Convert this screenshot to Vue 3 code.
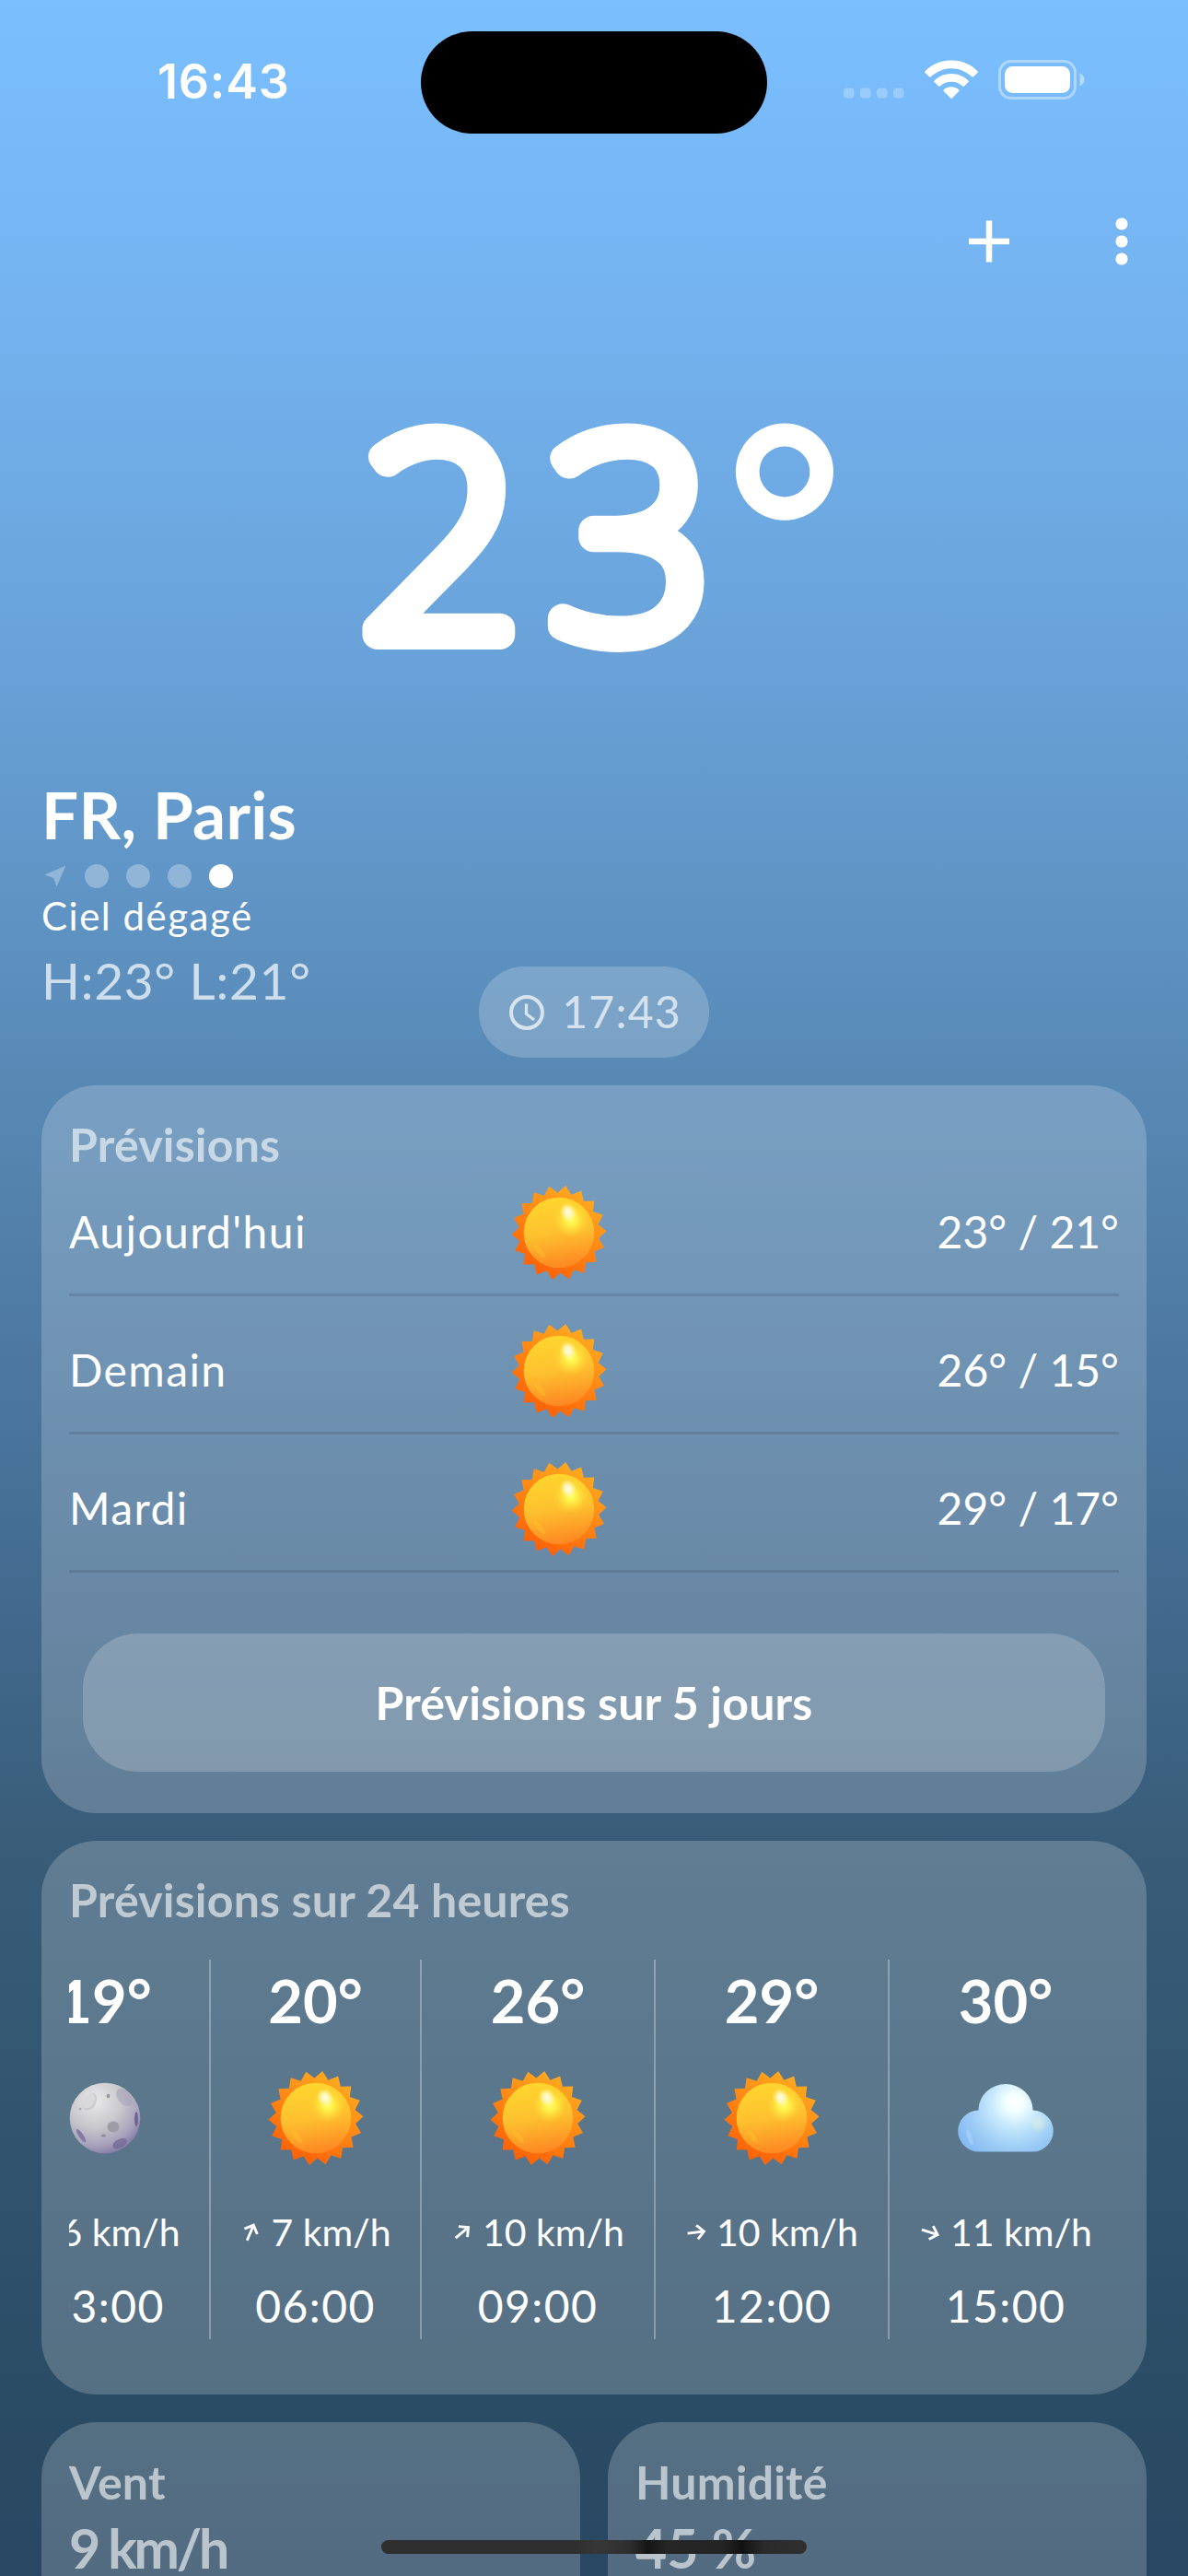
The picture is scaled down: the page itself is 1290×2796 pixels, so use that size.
<script setup>
const sunPoints = Array.from({ length: 36 }, (_, i) => {
  const angle = ((i * 10 - 2) * Math.PI) / 180
  const radius = i % 2 === 0 ? 51.5 : 43.5
  return `${(52 + radius * Math.cos(angle)).toFixed(2)},${(52 + radius * Math.sin(angle)).toFixed(2)}`
}).join(' ')

const days = [
  { name: "Aujourd'hui", temps: '23° / 21°' },
  { name: 'Demain', temps: '26° / 15°' },
  { name: 'Mardi', temps: '29° / 17°' },
]

const hours = [
  { temp: '19°', icon: 'moon', dir: 10, wind: '6 km/h', time: '03:00', narrow: true },
  { temp: '20°', icon: 'sun', dir: 23, wind: '7 km/h', time: '06:00', narrow: true },
  { temp: '26°', icon: 'sun', dir: 50, wind: '10 km/h', time: '09:00' },
  { temp: '29°', icon: 'sun', dir: 83, wind: '10 km/h', time: '12:00' },
  { temp: '30°', icon: 'cloud', dir: 108, wind: '11 km/h', time: '15:00' },
]
</script>

<template>
  <div class="screen">
    <svg class="defs" width="0" height="0" aria-hidden="true">
      <defs>
        <linearGradient id="ray" x1="0.25" y1="0.95" x2="0.75" y2="0.05">
          <stop offset="0" stop-color="#ff5f06" />
          <stop offset="1" stop-color="#ffab20" />
        </linearGradient>
        <linearGradient id="disc" x1="0.4" y1="0" x2="0.55" y2="1">
          <stop offset="0" stop-color="#ffd62e" />
          <stop offset="0.5" stop-color="#fdc02f" />
          <stop offset="1" stop-color="#fd8622" />
        </linearGradient>
        <radialGradient id="glow">
          <stop offset="0" stop-color="#ffff60" />
          <stop offset="0.3" stop-color="#fff850" stop-opacity="0.85" />
          <stop offset="1" stop-color="#ffdf33" stop-opacity="0" />
        </radialGradient>
        <radialGradient id="shine">
          <stop offset="0" stop-color="#fffbe0" />
          <stop offset="0.4" stop-color="#fff8c8" stop-opacity="0.9" />
          <stop offset="1" stop-color="#fff799" stop-opacity="0" />
        </radialGradient>
        <radialGradient id="moonFill" cx="0.36" cy="0.25" r="0.85">
          <stop offset="0" stop-color="#e9e9ea" />
          <stop offset="0.45" stop-color="#c8c7cb" />
          <stop offset="0.75" stop-color="#a7a1bb" />
          <stop offset="1" stop-color="#756b9e" />
        </radialGradient>
        <radialGradient id="cloudFill" gradientUnits="userSpaceOnUse" cx="62" cy="20" r="72">
          <stop offset="0" stop-color="#ffffff" />
          <stop offset="0.13" stop-color="#f4ffff" />
          <stop offset="0.38" stop-color="#c3e7fc" />
          <stop offset="0.7" stop-color="#9ccbf5" />
          <stop offset="1" stop-color="#83b8f1" />
        </radialGradient>
        <symbol id="sun" viewBox="0 0 104 104">
          <polygon :points="sunPoints" fill="url(#ray)" />
          <circle cx="52" cy="52" r="38.3" fill="url(#disc)" />
          <circle cx="65" cy="38" r="19" fill="url(#glow)" />
          <ellipse cx="62" cy="30" rx="9" ry="11" transform="rotate(-25 62 30)" fill="url(#shine)" />
          <ellipse cx="31" cy="72" rx="3" ry="9" transform="rotate(-40 31 72)" fill="#ffc62e" opacity="0.4" />
        </symbol>
        <symbol id="moon" viewBox="0 0 104 104">
          <circle cx="52" cy="52" r="38.3" fill="url(#moonFill)" />
          <ellipse cx="35.500" cy="34" rx="7" ry="10" transform="rotate(30 35.5 34)" fill="#b5b5b8" opacity="0.5" />
          <ellipse cx="34" cy="33" rx="6" ry="9" transform="rotate(30 34 33)" fill="#dededf" opacity="0.7" />
          <ellipse cx="73" cy="29.500" rx="7" ry="11" transform="rotate(-40 73 29.5)" fill="#a59fb8" opacity="0.55" />
          <ellipse cx="61" cy="61.500" rx="6.500" ry="6" fill="#9e9da5" />
          <ellipse cx="55.500" cy="28" rx="1.800" ry="2.200" fill="#98979f" />
          <circle cx="25" cy="42" r="1.300" fill="#a5a5aa" />
          <ellipse cx="50.500" cy="71" rx="2.600" ry="1.500" fill="#8f8b9d" />
          <ellipse cx="86" cy="53" rx="1.900" ry="8" fill="#6f6592" />
          <ellipse cx="26" cy="71" rx="2.400" ry="8.500" transform="rotate(-35 26 71)" fill="#837aa5" />
          <ellipse cx="68" cy="79.500" rx="8.500" ry="4.500" transform="rotate(-28 68 79.5)" fill="#6f6592" opacity="0.7" />
        </symbol>
        <symbol id="cloud" viewBox="0 0 104 74">
          <path d="M23 73.500A22.500 22.500 0 0 1 22.500 28.500A29.500 28.500 0 0 1 81.500 28.500A22.500 22.500 0 0 1 81 73.500Z" fill="url(#cloudFill)" />
          <circle cx="88" cy="43" r="10" fill="url(#shine)" opacity="0.3" />
          <ellipse cx="13" cy="58" rx="2.500" ry="9" transform="rotate(-20 13 58)" fill="#bfdffa" opacity="0.4" />
        </symbol>
      </defs>
    </svg>

    <header class="status">
      <span class="status-time">16:43</span>
      <div class="island"></div>
      <div class="status-icons">
        <svg class="cell" width="66" height="12" viewBox="0 0 66 12">
          <rect v-for="n in 4" :key="n" :x="(n - 1) * 18" y="0.500" width="11.500" height="11" rx="4" />
        </svg>
        <svg class="wifi" width="58" height="43" viewBox="0 0 58 43">
          <path d="M29 0.500C40.500 0.500 50.500 5 57.500 12.200a1.200 1.200 0 0 1 0 1.700L53 18.300a1.200 1.200 0 0 1-1.700 0C45 12.700 37.500 9.300 29 9.300S13 12.700 6.700 18.300a1.200 1.200 0 0 1-1.700 0L0.500 13.900a1.200 1.200 0 0 1 0-1.700C7.500 5 17.500 0.500 29 0.500Z" />
          <path d="M29 15c7.200 0 13.500 2.700 18.400 7.400a1.200 1.200 0 0 1 0 1.800L43 28.600a1.200 1.200 0 0 1-1.700 0A17.500 17.500 0 0 0 29 23.700 17.500 17.500 0 0 0 16.700 28.600a1.200 1.200 0 0 1-1.700 0l-4.400-4.400a1.200 1.200 0 0 1 0-1.800C15.500 17.700 21.800 15 29 15Z" />
          <path d="M29 29.200c3.200 0 6 1.100 8.200 3.100a1.200 1.200 0 0 1 0 1.800l-7.300 7.500a1.200 1.200 0 0 1-1.800 0l-7.300-7.500a1.200 1.200 0 0 1 0-1.800c2.200-2 5-3.100 8.200-3.100Z" />
        </svg>
        <svg class="battery" width="95" height="43" viewBox="0 0 95 43">
          <rect x="1.500" y="1.500" width="82" height="40" rx="12.500" fill="none" stroke="#fff" stroke-opacity="0.4" stroke-width="3" />
          <rect x="7" y="7" width="71" height="29" rx="8.500" fill="#fff" />
          <path d="M88.500 14.500c3 1.300 5 3.900 5 7s-2 5.700-5 7Z" fill="#fff" fill-opacity="0.45" />
        </svg>
      </div>
    </header>

    <nav class="toolbar">
      <svg width="46" height="46" viewBox="0 0 46 46">
        <path d="M23 0.500V45.500M1 23H45" stroke="#fff" stroke-width="6.500" />
      </svg>
      <svg class="more" width="14" height="52" viewBox="0 0 14 52" fill="#fff">
        <circle cx="7" cy="7" r="6.600" /><circle cx="7" cy="26" r="6.600" /><circle cx="7" cy="45" r="6.600" />
      </svg>
    </nav>

    <svg class="current" width="1290" height="481" viewBox="0 0 1290 481">
      <text transform="translate(392 329) scale(1.04 1)">2</text>
      <text transform="translate(597 329) scale(1.04 1)">3</text>
      <text class="degree" x="790" y="323">°</text>
    </svg>

    <section class="place">
      <h1>FR, Paris</h1>
      <div class="pages">
        <svg class="here" width="24" height="24" viewBox="0 0 24 24">
          <path d="M23.500 0.500L13.500 23.500L10 14L0.500 10.500Z" />
        </svg>
        <i class="dot"></i><i class="dot"></i><i class="dot"></i><i class="dot on"></i>
      </div>
      <p class="sky">Ciel dégagé</p>
      <p class="range">H:23° L:21°</p>
    </section>

    <div class="clock">
      <svg width="40" height="40" viewBox="0 0 40 40" fill="none" stroke="currentColor" stroke-width="4">
        <circle cx="20" cy="20" r="17" />
        <path d="M19.500 10.500V21.500L28 28" stroke-width="3.400" />
      </svg>
      <span>17:43</span>
    </div>

    <main>
      <section class="card daily">
        <h2>Prévisions</h2>
        <div v-for="day in days" :key="day.name" class="day">
          <span class="day-name">{{ day.name }}</span>
          <svg class="icon" width="104" height="104"><use href="#sun" /></svg>
          <span class="day-temps">{{ day.temps }}</span>
        </div>
        <button type="button">Prévisions sur 5 jours</button>
      </section>

      <section class="card hourly">
        <h2>Prévisions sur 24 heures</h2>
        <div class="scroller">
          <div class="track">
            <div v-for="hour in hours" :key="hour.time" :class="['hour', { narrow: hour.narrow }]">
              <strong>{{ hour.temp }}</strong>
              <div class="hour-icon">
                <svg v-if="hour.icon === 'cloud'" width="104" height="74"><use href="#cloud" /></svg>
                <svg v-else width="104" height="104"><use :href="'#' + hour.icon" /></svg>
              </div>
              <div class="wind">
                <svg width="24" height="24" viewBox="0 0 24 24">
                  <path
                    d="M12 21.500V4M4.500 11L12 3.500L19.500 11"
                    fill="none" stroke="#fff" stroke-width="2.900"
                    :transform="`rotate(${hour.dir} 12 12)`"
                  />
                </svg>
                <span>{{ hour.wind }}</span>
              </div>
              <span class="time">{{ hour.time }}</span>
            </div>
          </div>
        </div>
      </section>

      <div class="pair">
        <section class="card stat">
          <h2>Vent</h2>
          <p class="speed">9 km/h</p>
        </section>
        <section class="card stat">
          <h2>Humidité</h2>
          <p>45 %</p>
        </section>
      </div>
    </main>

    <div class="home"></div>
  </div>
</template>

<style>
body {
  margin: 0;
}
</style>

<style scoped>
.screen {
  position: relative;
  width: 1290px;
  height: 2796px;
  overflow: hidden;
  color: #fff;
  font-family: Lato, "Noto Sans", sans-serif;
  background: linear-gradient(180deg, #7bbfff 0, #74b3f0 330px, #68a1d7 740px, #5889b5 1170px, #436b90 1720px, #395d79 2000px, #2b4c65 2600px, #294762 2796px);
}
.screen * {
  box-sizing: border-box;
}
.defs {
  position: absolute;
}
h1,
h2,
p {
  margin: 0;
  white-space: nowrap;
}
svg {
  display: block;
  flex: none;
}

.status {
  height: 162px;
  padding: 33px 111px 0 171px;
  display: grid;
  grid-template-columns: 286px 376px 1fr;
  align-items: start;
}
.status-time {
  margin-top: 24px;
  font: 600 52px/64px Inter, sans-serif;
  letter-spacing: 0.8px;
}
.island {
  height: 111px;
  margin-top: 0.5px;
  border-radius: 56px;
  background: #000;
}
.status-icons {
  display: flex;
  justify-content: flex-end;
  align-items: flex-end;
  padding-top: 32px;
}
.cell {
  fill: rgba(255, 255, 255, 0.25);
  margin: 0 22px 1px 0;
}
.wifi {
  fill: #fff;
  margin-right: 22px;
}

.toolbar {
  height: 198px;
  display: flex;
  justify-content: flex-end;
  align-items: center;
  gap: 114px;
  padding: 1px 65px 0 0;
}

.current text {
  font-family: "Noto Sans", "Open Sans", sans-serif;
  font-weight: 100;
  font-size: 295px;
  fill: #fff;
  stroke: #fff;
  stroke-width: 32px;
  stroke-linejoin: round;
}
.current .degree {
  font-family: Lato, sans-serif;
  font-weight: 100;
  font-size: 300px;
  stroke-width: 22px;
}

.place {
  height: 337px;
  padding-left: 45px;
}
.place h1 {
  font-size: 71px;
  line-height: 86px;
  height: 84px;
  font-weight: 700;
  letter-spacing: 0.3px;
}
.pages {
  display: flex;
  align-items: center;
  height: 26px;
  margin: 13px 0 5px 3px;
}
.here {
  fill: rgba(255, 255, 255, 0.3);
  margin-right: 20px;
}
.dot {
  width: 26px;
  height: 26px;
  margin-right: 19px;
  border-radius: 50%;
  background: rgba(255, 255, 255, 0.3);
}
.dot.on {
  background: #fff;
}
.sky {
  font-size: 42px;
  line-height: 50px;
  letter-spacing: 1.5px;
}
.range {
  margin-top: 12px;
  font-size: 55px;
  line-height: 66px;
  letter-spacing: 0.7px;
  color: rgba(255, 255, 255, 0.7);
}

.clock {
  width: 250px;
  height: 99px;
  margin: -129px auto 30px;
  padding: 0 30px 0 32px;
  display: flex;
  align-items: center;
  justify-content: space-between;
  border-radius: 50px;
  background: rgba(255, 255, 255, 0.2);
  color: rgba(255, 255, 255, 0.7);
  font-size: 48px;
  letter-spacing: 1.3px;
}
.clock span {
  padding-bottom: 2px;
}

main {
  display: flex;
  flex-direction: column;
  gap: 30px;
  padding: 0 45px;
}
.card {
  padding: 44px 30px 0;
  border-radius: 60px;
  background: rgba(255, 255, 255, 0.2);
}
.card h2 {
  height: 35px;
  font-size: 50px;
  line-height: 41px;
  font-weight: 700;
  letter-spacing: 0.2px;
  color: rgba(255, 255, 255, 0.6);
}

.daily {
  padding-bottom: 45px;
}
.day {
  height: 150px;
  padding-top: 14px;
  display: flex;
  align-items: center;
  justify-content: space-between;
  border-bottom: 3px solid rgba(0, 0, 0, 0.1);
  font-size: 48px;
}
.day-name,
.day-temps {
  width: 400px;
  padding-bottom: 2px;
}
.day-name {
  letter-spacing: 1.4px;
}
.day .icon {
  margin-right: 76px;
}
.day-temps {
  text-align: right;
}
button {
  display: block;
  width: 1110px;
  height: 150px;
  margin: 66px 15px 0;
  padding: 0;
  border: 0;
  border-radius: 60px;
  background: rgba(255, 255, 255, 0.2);
  color: #fff;
  font: 700 50px/150px Lato, sans-serif;
  letter-spacing: 0.2px;
}

.hourly {
  height: 601px;
}
.scroller {
  margin-top: 50px;
  overflow: hidden;
}
.track {
  display: flex;
  width: 1219px;
  margin-left: -75px;
}
.hour {
  flex: none;
  width: 254px;
  height: 412px;
  padding-top: 4px;
  display: flex;
  flex-direction: column;
  align-items: center;
  border-right: 2px solid rgba(255, 255, 255, 0.3);
}
.hour.narrow {
  width: 229px;
}
.hour strong {
  font-size: 65px;
  line-height: 80px;
  font-weight: 700;
}
.hour-icon {
  height: 104px;
  margin-top: 36px;
  display: flex;
  align-items: center;
}
.wind {
  margin-top: 47px;
  display: flex;
  align-items: center;
  gap: 10px;
  font-size: 41px;
  line-height: 50px;
}
.time {
  margin-top: 25px;
  font-size: 48px;
  line-height: 60px;
  letter-spacing: 1.4px;
}

.pair {
  display: grid;
  grid-template-columns: 1fr 1fr;
  gap: 30px;
}
.stat {
  height: 300px;
  padding-top: 45px;
}
.stat p {
  margin-top: 22px;
  font-size: 59px;
  line-height: 70px;
  font-weight: 700;
  color: rgba(255, 255, 255, 0.6);
}
.stat .speed {
  letter-spacing: -3.2px;
}

.home {
  position: absolute;
  left: 414px;
  top: 2757px;
  width: 462px;
  height: 15px;
  border-radius: 8px;
  background: linear-gradient(90deg, #2f2f2f 0, #2f2f2f 210px, #373737 235px, #2e2e2e 270px, #151515 290px, #262626 310px, #242424 370px, #121212 392px, #2a2a2a 415px, #2f2f2f 100%);
}
</style>
